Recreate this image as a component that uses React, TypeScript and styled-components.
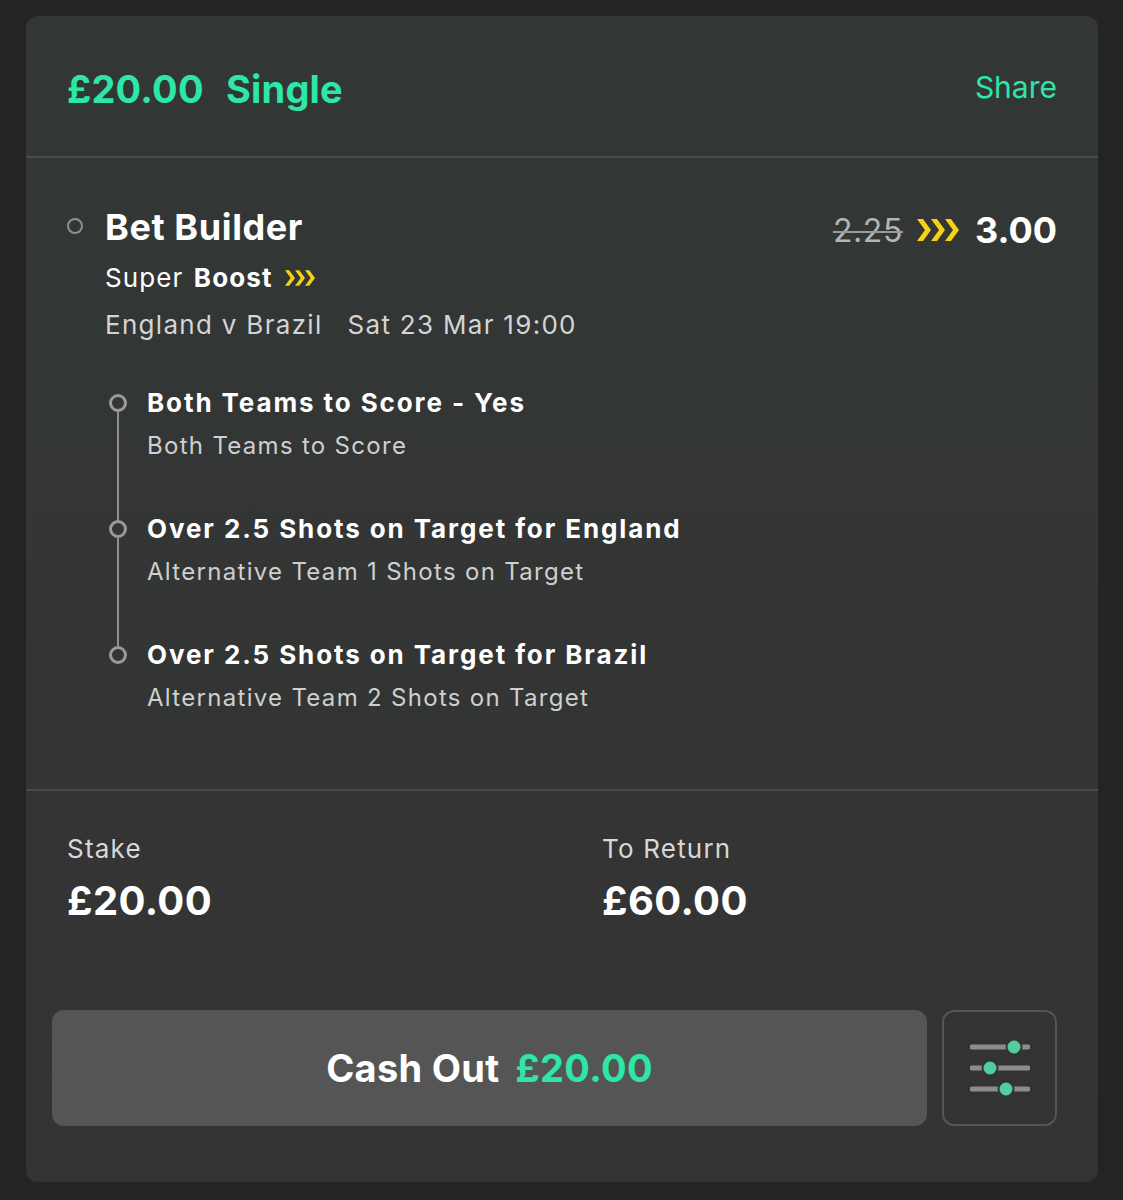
import React from 'react';
import styled, { createGlobalStyle } from 'styled-components';

const GlobalStyle = createGlobalStyle`
  body {
    margin: 0;
    background: #242424;
    font-family: Inter, "Noto Sans", sans-serif;
    color: #ffffff;
  }
`;

const Page = styled.div`
  padding: 16px 25px 18px 26px;
`;

const Card = styled.div`
  background: linear-gradient(180deg, #323735 0%, #333534 60%, #333333 100%);
  border-radius: 12px;
  overflow: hidden;
`;

const Header = styled.div`
  height: 140px;
  display: flex;
  align-items: center;
  justify-content: space-between;
  padding: 0 41px;
  border-bottom: 2px solid #474c4a;
`;

const Title = styled.div`
  font-size: 38px;
  font-weight: 700;
  color: #2ee6a6;
  word-spacing: 13px;
  letter-spacing: 0.2px;
  margin-top: 6px;
`;

const ShareLink = styled.div`
  font-size: 30px;
  color: #2ee6a6;
  margin-top: 2px;
`;

const BetSection = styled.div`
  padding: 44px 41px 74px;
  border-bottom: 2px solid #474c4a;
`;

const TopRow = styled.div`
  display: flex;
  align-items: center;
`;

const Dot = styled.span`
  width: 16px;
  height: 16px;
  margin-top: -2px;
  border: 2px solid #8f8f8f;
  border-radius: 50%;
  flex-shrink: 0;
  box-sizing: border-box;
`;

const BetName = styled.div`
  flex: 1;
  margin-left: 22px;
  font-size: 36px;
  line-height: 44px;
  font-weight: 700;
  letter-spacing: 0.6px;
`;

const Odds = styled.div`
  display: flex;
  align-items: center;
  gap: 14px;
  margin-top: 6px;
`;

const OldOdds = styled.span`
  font-size: 32px;
  color: #b4b4b4;
  letter-spacing: 0.6px;
  text-decoration: line-through;
  text-decoration-color: #9a9a9a;
  text-decoration-thickness: 2px;
`;

const NewOdds = styled.span`
  font-size: 36px;
  font-weight: 700;
  margin-left: 2px;
`;

const Details = styled.div`
  padding-left: 38px;
`;

const BoostLine = styled.div`
  margin-top: 8px;
  font-size: 26px;
  line-height: 36px;
  letter-spacing: 1.1px;
  display: flex;
  align-items: center;
  gap: 12px;

  b {
    font-weight: 700;
    margin-left: 2px;
  }
`;

const EventLine = styled.div`
  margin-top: 11px;
  font-size: 26px;
  line-height: 36px;
  color: #d4d4d4;
  letter-spacing: 1.3px;

  span {
    margin-left: 25px;
  }
`;

const Legs = styled.div`
  margin-top: 43px;
  display: flex;
  flex-direction: column;
  gap: 49px;
`;

const Leg = styled.div<{ $last?: boolean }>`
  display: flex;
  position: relative;

  &::before {
    content: '';
    display: ${({ $last }) => ($last ? 'none' : 'block')};
    position: absolute;
    left: 12px;
    top: 25px;
    width: 2px;
    height: 118px;
    background: #8f8f8f;
  }
`;

const LegMarker = styled.span`
  width: 18px;
  height: 18px;
  margin-top: 8px;
  margin-left: 4px;
  border: 3px solid #9a9a9a;
  border-radius: 50%;
  box-sizing: border-box;
  flex-shrink: 0;
  background: #333635;
  position: relative;
  z-index: 1;
`;

const LegText = styled.div`
  margin-left: 20px;
`;

const LegTitle = styled.div`
  font-size: 26px;
  line-height: 34px;
  font-weight: 700;
  letter-spacing: 1.9px;
`;

const LegSub = styled.div`
  margin-top: 9px;
  font-size: 24px;
  line-height: 34px;
  color: #cfcfcf;
  letter-spacing: 1.3px;
`;

const Totals = styled.div`
  padding: 41px 41px 0;
  display: grid;
  grid-template-columns: 535px 1fr;
`;

const TotalLabel = styled.div`
  font-size: 26px;
  line-height: 34px;
  color: #d8d8d8;
  letter-spacing: 1.2px;
`;

const TotalValue = styled.div`
  margin-top: 11px;
  font-size: 40px;
  line-height: 48px;
  font-weight: 700;
  letter-spacing: 0.4px;
`;

const Actions = styled.div`
  display: flex;
  gap: 15px;
  padding: 85px 41px 56px 26px;
`;

const CashOutButton = styled.button`
  flex: 1;
  height: 116px;
  border: none;
  border-radius: 12px;
  background: #555555;
  color: #ffffff;
  font-family: inherit;
  font-size: 38px;
  font-weight: 700;
  letter-spacing: 0.3px;

  span {
    color: #2ee6a6;
    margin-left: 16px;
  }
`;

const SettingsButton = styled.button`
  width: 115px;
  height: 116px;
  border: 2px solid #555555;
  border-radius: 12px;
  background: transparent;
  display: flex;
  align-items: center;
  justify-content: center;
  padding: 0;
`;

const Chevrons: React.FC<{ w: number; h: number }> = ({ w, h }) => (
  <svg width={w} height={h} viewBox="0 0 42 22">
    {[0, 14, 28].map((x) => (
      <polygon
        key={x}
        points={`${x},0 ${x + 6},0 ${x + 14},11 ${x + 6},22 ${x},22 ${x + 8},11`}
        fill="#f5d313"
      />
    ))}
  </svg>
);

const SlidersIcon = () => (
  <svg width="60" height="60" viewBox="0 0 60 60">
    {[9, 30, 51].map((y) => (
      <line key={y} x1="2" y1={y} x2="58" y2={y} stroke="#8c8c8c" strokeWidth="5" strokeLinecap="round" />
    ))}
    <circle cx="44" cy="9" r="7.5" fill="#4fcf9c" stroke="#333" strokeWidth="2" />
    <circle cx="20" cy="30" r="7.5" fill="#4fcf9c" stroke="#333" strokeWidth="2" />
    <circle cx="36" cy="51" r="7.5" fill="#4fcf9c" stroke="#333" strokeWidth="2" />
  </svg>
);

const legs = [
  { title: 'Both Teams to Score - Yes', sub: 'Both Teams to Score' },
  { title: 'Over 2.5 Shots on Target for England', sub: 'Alternative Team 1 Shots on Target' },
  { title: 'Over 2.5 Shots on Target for Brazil', sub: 'Alternative Team 2 Shots on Target' },
];

export default function App() {
  return (
    <Page>
      <GlobalStyle />
      <Card>
        <Header>
          <Title>£20.00 Single</Title>
          <ShareLink>Share</ShareLink>
        </Header>

        <BetSection>
          <TopRow>
            <Dot />
            <BetName>Bet Builder</BetName>
            <Odds>
              <OldOdds>2.25</OldOdds>
              <Chevrons w={42} h={22} />
              <NewOdds>3.00</NewOdds>
            </Odds>
          </TopRow>
          <Details>
            <BoostLine>
              <span>
                Super <b>Boost</b>
              </span>
              <Chevrons w={30} h={16} />
            </BoostLine>
            <EventLine>
              England v Brazil<span>Sat 23 Mar 19:00</span>
            </EventLine>
            <Legs>
              {legs.map((l, i) => (
                <Leg key={i} $last={i === legs.length - 1}>
                  <LegMarker />
                  <LegText>
                    <LegTitle>{l.title}</LegTitle>
                    <LegSub>{l.sub}</LegSub>
                  </LegText>
                </Leg>
              ))}
            </Legs>
          </Details>
        </BetSection>

        <Totals>
          <div>
            <TotalLabel>Stake</TotalLabel>
            <TotalValue>£20.00</TotalValue>
          </div>
          <div>
            <TotalLabel>To Return</TotalLabel>
            <TotalValue>£60.00</TotalValue>
          </div>
        </Totals>

        <Actions>
          <CashOutButton>
            Cash Out<span>£20.00</span>
          </CashOutButton>
          <SettingsButton>
            <SlidersIcon />
          </SettingsButton>
        </Actions>
      </Card>
    </Page>
  );
}
